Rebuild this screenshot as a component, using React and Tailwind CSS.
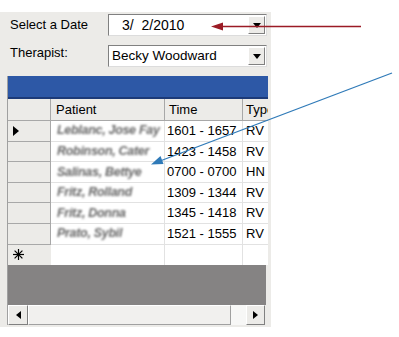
import React from "react";

const rows = [
  { name: "Leblanc, Jose Fay", time: "1601 - 1657", typ: "RV", sel: true },
  { name: "Robinson, Cater", time: "1423 - 1458", typ: "RV" },
  { name: "Salinas, Bettye", time: "0700 - 0700", typ: "HN" },
  { name: "Fritz, Rolland", time: "1309 - 1344", typ: "RV" },
  { name: "Fritz, Donna", time: "1345 - 1418", typ: "RV" },
  { name: "Prato, Sybil", time: "1521 - 1555", typ: "RV" },
];

function DropBtn() {
  return (
    <div className="w-[17px] h-full bg-[#ecebe8] border border-t-white border-l-white border-r-[#808080] border-b-[#808080] flex items-center justify-center">
      <svg width="8" height="5" viewBox="0 0 8 5">
        <path d="M0 0 H8 L4 5 Z" fill="#000" />
      </svg>
    </div>
  );
}

function Combo({ children, pl }) {
  return (
    <div className="ml-auto mr-[4px] w-[159px] h-[22px] flex border border-t-[#808080] border-l-[#808080] border-r-[#dcdcdc] border-b-[#dcdcdc] bg-white p-[1px]">
      <div className={`flex-1 flex items-center text-black ${pl}`}>{children}</div>
      <DropBtn />
    </div>
  );
}

export default function App() {
  return (
    <div className="relative w-[399px] h-[337px] bg-white overflow-hidden" style={{ fontFamily: '"Liberation Sans", Arial, sans-serif' }}>
      <div className="mt-[12px] w-[271px] h-[315px] bg-[#ecebe8] flex flex-col">
        <div className="mt-[2px] h-[22px] flex items-center">
          <span className="pl-[10px] text-[13px] text-black">Select a Date</span>
          <Combo pl="pl-[12px] text-[14px]">3/&nbsp;&nbsp;2/2010</Combo>
        </div>
        <div className="mt-[9px] h-[22px] flex items-center">
          <span className="pl-[10px] text-[13px] text-black -mt-[6px]">Therapist:</span>
          <Combo pl="pl-[2px] text-[13.5px]">Becky Woodward</Combo>
        </div>
        <div className="mt-[9px] ml-[7px] w-[261px] flex flex-col border-l border-[#a0a0a0]">
          <div className="h-[23px] bg-[#2d58a6] border-b-2 border-[#1c3a78]" />
          <div className="flex h-[22px] bg-[#ecebe8] text-[13px] text-black">
            <div className="w-[43px] border-r border-b border-[#a8a8a8]" />
            <div className="w-[114px] border-r border-b border-[#a8a8a8] pl-[5px] flex items-center">Patient</div>
            <div className="w-[78px] border-r border-b border-[#a8a8a8] pl-[4px] flex items-center">Time</div>
            <div className="flex-1 border-b border-[#a8a8a8] pl-[3px] flex items-center overflow-hidden whitespace-nowrap">Type</div>
          </div>
          {rows.map((r, i) => (
            <div key={i} className="flex h-[20.6px] text-[13px] text-black">
              <div className="w-[43px] bg-[#ecebe8] border-r border-b border-[#a8a8a8] flex items-center pl-[5px]">
                {r.sel && (
                  <svg width="6" height="10" viewBox="0 0 6 10">
                    <path d="M0 0 L6 5 L0 10 Z" fill="#000" />
                  </svg>
                )}
              </div>
              <div className="w-[114px] bg-white border-r border-b border-[#e2e2e2] pl-[6px] flex items-center overflow-hidden">
                <span className="italic font-bold text-[#666] blur-[1.2px] whitespace-nowrap text-[12.5px] tracking-[-0.3px]">{r.name}</span>
              </div>
              <div className="w-[78px] bg-white border-r border-b border-[#e2e2e2] pl-[2px] flex items-center whitespace-nowrap">{r.time}</div>
              <div className="flex-1 bg-white border-b border-[#e2e2e2] pl-[3px] flex items-center">{r.typ}</div>
            </div>
          ))}
          <div className="flex h-[20.6px] text-[13px] text-black">
            <div className="w-[43px] bg-[#ecebe8] flex items-center pl-[5px]">
              <svg width="11" height="11" viewBox="0 0 11 11">
                <g stroke="#000" strokeWidth="1.2">
                  <line x1="5.5" y1="0" x2="5.5" y2="11" />
                  <line x1="0" y1="5.5" x2="11" y2="5.5" />
                  <line x1="1.6" y1="1.6" x2="9.4" y2="9.4" />
                  <line x1="9.4" y1="1.6" x2="1.6" y2="9.4" />
                </g>
              </svg>
            </div>
            <div className="w-[114px] bg-white border-r border-[#e2e2e2]" />
            <div className="w-[78px] bg-white border-r border-[#e2e2e2]" />
            <div className="flex-1 bg-white" />
          </div>
          <div className="h-[40px] bg-[#858383] mr-[2px]" />
          <div className="h-[20px] flex bg-[#f4f3f1] mr-[3px]">
            <div className="w-[20px] h-full bg-[#ecebe8] border border-t-white border-l-white border-r-[#808080] border-b-[#808080] flex items-center justify-center">
              <svg width="5" height="8" viewBox="0 0 5 8"><path d="M5 0 L0 4 L5 8 Z" fill="#000" /></svg>
            </div>
            <div className="w-[203px] h-full bg-[#f1f0ee] border border-t-white border-l-white border-r-[#a0a0a0] border-b-[#a0a0a0]" />
            <div className="flex-1 h-full bg-[#f7f7f6]" />
            <div className="w-[19px] h-full bg-[#ecebe8] border border-t-white border-l-white border-r-[#808080] border-b-[#808080] flex items-center justify-center">
              <svg width="5" height="8" viewBox="0 0 5 8"><path d="M0 0 L5 4 L0 8 Z" fill="#000" /></svg>
            </div>
          </div>
        </div>
      </div>
      <svg className="absolute left-0 top-0 pointer-events-none" width="399" height="337" viewBox="0 0 399 337">
        <line x1="221" y1="26.5" x2="361" y2="26.5" stroke="#9b1b25" strokeWidth="1.3" />
        <path d="M211 26.5 L223 22.5 L223 30.5 Z" fill="#9b1b25" />
        <line x1="392" y1="73" x2="160" y2="161" stroke="#2f7ab8" strokeWidth="1.3" />
        <path d="M151 164.5 L160.5 156 L163.5 164 Z" fill="#2f7ab8" />
      </svg>
    </div>
  );
}
